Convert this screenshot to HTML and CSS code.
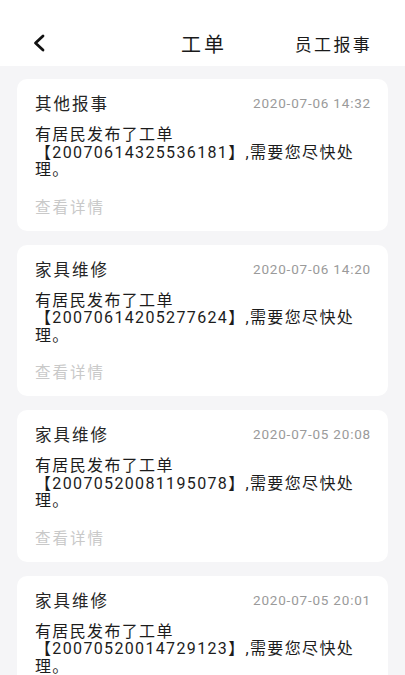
FILE: index.html
```html
<!DOCTYPE html>
<html lang="zh-CN">
<head>
<meta charset="utf-8">
<title>工单</title>
<link rel="stylesheet" href="styles.css">
</head>
<body>
<header class="topbar">
  <div class="back">
    <svg width="14" height="18" viewBox="0 0 14 18" aria-hidden="true"><polyline points="11,2 3.5,9 11,16" fill="none" stroke="#111" stroke-width="2.8" stroke-linecap="round" stroke-linejoin="round"/></svg>
  </div>
  <div class="title">工单</div>
  <div class="action">员工报事</div>
</header>
<main class="list">
  <section class="card">
    <div class="card-head"><span class="card-title">其他报事</span><span class="card-date">2020-07-06 14:32</span></div>
    <p class="card-body">有居民发布了工单【20070614325536181】,需要您尽快处理。</p>
    <div class="card-link">查看详情</div>
  </section>
  <section class="card">
    <div class="card-head"><span class="card-title">家具维修</span><span class="card-date">2020-07-06 14:20</span></div>
    <p class="card-body">有居民发布了工单【20070614205277624】,需要您尽快处理。</p>
    <div class="card-link">查看详情</div>
  </section>
  <section class="card">
    <div class="card-head"><span class="card-title">家具维修</span><span class="card-date">2020-07-05 20:08</span></div>
    <p class="card-body">有居民发布了工单【20070520081195078】,需要您尽快处理。</p>
    <div class="card-link">查看详情</div>
  </section>
  <section class="card">
    <div class="card-head"><span class="card-title">家具维修</span><span class="card-date">2020-07-05 20:01</span></div>
    <p class="card-body">有居民发布了工单【20070520014729123】,需要您尽快处理。</p>
    <div class="card-link">查看详情</div>
  </section>
</main>
</body>
</html>
```

FILE: styles.css
```css
* { box-sizing: border-box; }
html, body {
  margin: 0;
  padding: 0;
  background: #f5f5f7;
  font-family: Roboto, "Noto Sans CJK SC", sans-serif;
  color: #222;
}
body { overflow: hidden; }

.topbar {
  background: #fff;
  height: 66px;
  padding-top: 20px;
  display: grid;
  grid-template-columns: 1fr auto 1fr;
  align-items: center;
}
.topbar > div { height: 46px; display: flex; align-items: center; }
.back { padding-left: 32px; }
.back svg { display: block; }
.title {
  font-size: 20px;
  letter-spacing: 3px;
  margin-right: -3px;
  color: #1a1a1a;
}
.action {
  justify-self: end;
  padding-right: 33px;
  font-size: 17px;
  letter-spacing: 2.3px;
  color: #1a1a1a;
}

.list {
  padding: 13px 17px;
  display: flex;
  flex-direction: column;
  gap: 14px;
}
.card {
  background: #fff;
  border-radius: 10px;
  padding: 14px 17px 13px 18px;
}
.card-head {
  display: flex;
  justify-content: space-between;
  align-items: center;
  height: 20px;
}
.card-title {
  font-size: 16.5px;
  letter-spacing: 2px;
  color: #262626;
}
.card-date {
  font-size: 13.5px;
  letter-spacing: 0.8px;
  color: #9a9a9a;
}
.card-body {
  margin: 13px 0 0;
  font-size: 16px;
  letter-spacing: 1.35px;
  line-height: 17.5px;
  color: #1c1c1c;
}
.card-link {
  margin-top: 19px;
  height: 20px;
  line-height: 20px;
  font-size: 15.5px;
  letter-spacing: 2px;
  color: #c9c9c9;
}
```
